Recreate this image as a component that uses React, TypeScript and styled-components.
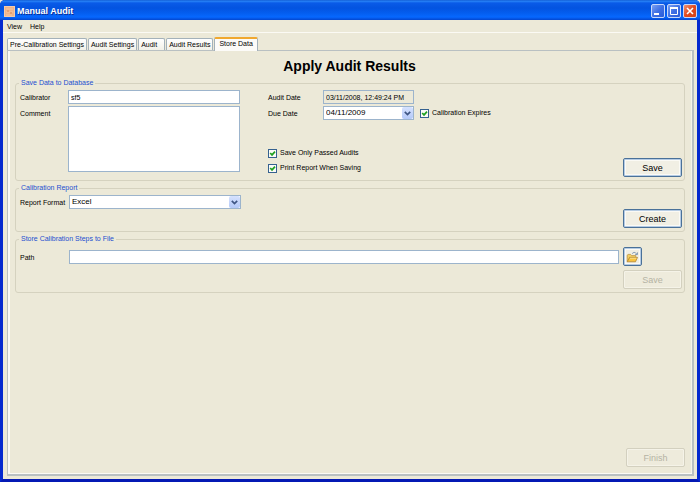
import React from "react";
import styled, { createGlobalStyle, css } from "styled-components";

const sans = `"Liberation Sans", Arial, sans-serif`;

const GlobalStyle = createGlobalStyle`
  * { box-sizing: border-box; }
  body { margin: 0; background: #ece9d8; }
  button, input, select, textarea { font: inherit; color: inherit; margin: 0; }
`;

const Window = styled.div`
  display: flex;
  flex-direction: column;
  min-height: 100vh;
  border: solid;
  border-width: 0 3px 3px;
  border-color: #0645e4 #0429cf #0419b4 #0429cf;
  border-radius: 5px 5px 0 0;
  background: #ece9d8;
  color: #000;
  font: 7px/10px ${sans};
`;

const TitleBar = styled.header`
  display: flex;
  align-items: center;
  gap: 2px;
  height: 20px;
  margin: 0 -3px;
  padding: 2px 3px 0 4px;
  border-radius: 5px 5px 0 0;
  background: linear-gradient(#0a4fc9 0, #2a86f8 1px, #0a5be8 3px, #0353e0 8px, #0460f2 14px, #0668ff 17px, #0346cf 20px);
  color: #fff;
`;

const WindowTitle = styled.span`
  flex: 1;
  font: bold 9px/12px ${sans};
  text-shadow: 1px 1px 0 #0a2f96;
`;

const CaptionButtons = styled.div`
  display: flex;
  gap: 2px;
`;

const CaptionButton = styled.button<{ $close?: boolean }>`
  display: flex;
  width: 14px;
  height: 14px;
  padding: 0;
  border: 1px solid #c8d8fa;
  border-radius: 2px;
  background: ${(p) =>
    p.$close
      ? "linear-gradient(135deg, #ee9476, #e04a1e 50%, #d0441a)"
      : "linear-gradient(135deg, #7ba0f2, #3f70e4 50%, #2a5cd8)"};
`;

const MenuBar = styled.nav`
  display: flex;
  gap: 8px;
  height: 13px;
  padding: 1px 4px 0;
  border-bottom: 1px solid #fbfaf4;
`;

const MenuButton = styled.button`
  padding: 0;
  border: 0;
  background: none;
`;

const Tabs = styled.div`
  display: flex;
  align-items: flex-end;
  gap: 1px;
  height: 17px;
  padding: 0 4px;
`;

const Tab = styled.button<{ $active?: boolean }>`
  min-width: 27px;
  height: 12px;
  padding: 0 2px;
  border: 1px solid #a3b1ba;
  border-bottom: 0;
  border-radius: 2px 2px 0 0;
  background: linear-gradient(#fff, #f2f1e8);
  text-align: left;
  white-space: nowrap;
  ${(p) =>
    p.$active &&
    css`
      height: 14px;
      margin-bottom: -1px;
      padding: 0 4px 2px;
      border-top: 2px solid #f0a830;
      background: #fcfbf8;
      z-index: 1;
    `}
`;

const Panel = styled.main`
  display: flex;
  flex: 1;
  flex-direction: column;
  gap: 2px;
  margin: 0 3px 3px 4px;
  padding: 8px 7px 7px 6px;
  border: solid #b9c0c2;
  border-width: 1px 2px 2px 1px;
  box-shadow: inset 2px 0 0 #fbfaf6, inset 0 -1px 0 #fbfaf6, inset -1px 0 0 #f6f4ea;
`;

const Heading = styled.h1`
  margin: 0 0 3px;
  font: bold 14px/14px ${sans};
  text-align: center;
`;

const Group = styled.fieldset`
  min-width: 0;
  margin: 0 0 0 1px;
  padding: 2px 2px 3px 4px;
  border: 1px solid #d5d2bf;
  border-radius: 3px;
`;

const Legend = styled.legend`
  margin-left: -1px;
  padding: 0 2px;
  color: #1c4fd0;
`;

const SaveArea = styled.div`
  display: flex;
  justify-content: space-between;
  min-height: 87px;
`;

const SaveAction = styled.div`
  align-self: flex-end;
`;

const Fields = styled.div<{ $label: number; $field: string }>`
  display: grid;
  grid-template-columns: ${(p) => p.$label}px ${(p) => p.$field};
  align-content: start;
  gap: 2px 0;
`;

const Columns = styled.div`
  display: flex;
  gap: 28px;
`;

const Stack = styled.div<{ $gap: number }>`
  display: flex;
  flex-direction: column;
  gap: ${(p) => p.$gap}px;
`;

const Label = styled.label`
  padding-top: 3px;
  white-space: nowrap;
`;

const boxed = css`
  width: 100%;
  border: 1px solid #9cb4cc;
  border-radius: 0;
  background: #fff;
  outline: 0;
`;

const TextInput = styled.input`
  ${boxed}
  display: block;
  height: 14px;
  padding: 0 2px;
  &:read-only {
    background: #ece9d8;
  }
`;

const TextArea = styled.textarea`
  ${boxed}
  display: block;
  height: 66px;
  padding: 1px 2px;
  resize: none;
`;

const SelectBox = styled.div`
  position: relative;
`;

const NativeSelect = styled.select`
  ${boxed}
  display: block;
  height: 14px;
  padding: 0 14px 0 2px;
  font-size: 8px;
  appearance: none;
`;

const SelectArrow = styled.span`
  position: absolute;
  top: 1px;
  right: 1px;
  display: flex;
  align-items: center;
  justify-content: center;
  width: 11px;
  height: 12px;
  border-radius: 2px;
  background: linear-gradient(#d6e2fe, #b4c9f8);
  pointer-events: none;
`;

const DateRow = styled.div`
  display: flex;
  align-items: center;
  gap: 6px;
`;

const DateField = styled.div`
  width: 91px;
`;

const CheckLabel = styled.label`
  display: flex;
  align-items: center;
  gap: 3px;
  white-space: nowrap;
`;

const CheckBox = styled.input`
  width: 9px;
  height: 9px;
  border: 1px solid #35618f;
  background: #fbfbf8;
  appearance: none;
  &:checked {
    background: #fbfbf8
      url("data:image/svg+xml,%3Csvg xmlns='http://www.w3.org/2000/svg' viewBox='0 0 7 7'%3E%3Cpath d='M1.2 3 3 4.9 6 1.6' fill='none' stroke='%2321a121' stroke-width='1.7'/%3E%3C/svg%3E")
      center / 7px 7px no-repeat;
  }
`;

const PushButton = styled.button<{ $icon?: boolean }>`
  display: flex;
  flex: none;
  align-items: center;
  justify-content: center;
  width: ${(p) => (p.$icon ? 19 : 59)}px;
  height: 19px;
  padding: 0;
  border: 1px solid #4a7199;
  border-radius: 2px;
  background: #f1efe4;
  box-shadow: inset 0 0 0 1px #b5cbe3, inset 0 0 0 2px #fbfaf5;
  font: 9px/10px ${sans};
  &:disabled {
    border-color: #d3d0bf;
    background: #eeebdc;
    box-shadow: inset 0 0 0 1px #f5f3e8;
    color: #b5b3a4;
  }
`;

const PathRow = styled.div`
  display: flex;
  align-items: center;
  gap: 4px;
  padding: 1px 40px 4px 0;
`;

const PathLabel = styled(Label)`
  width: 45px;
`;

const PathField = styled.div`
  flex: 1;
`;

const Actions = styled.div`
  display: flex;
  justify-content: flex-end;
`;

const Footer = styled(Actions)`
  margin-top: auto;
`;

function Select({ id, options }: { id: string; options: string[] }) {
  return (
    <SelectBox>
      <NativeSelect id={id}>
        {options.map((o) => (
          <option key={o}>{o}</option>
        ))}
      </NativeSelect>
      <SelectArrow>
        <svg width="7" height="5" viewBox="0 0 7 5">
          <path d="M.8.8 3.5 3.5 6.2.8" fill="none" stroke="#3f5684" strokeWidth="1.7" />
        </svg>
      </SelectArrow>
    </SelectBox>
  );
}

function Check({ text }: { text: string }) {
  return (
    <CheckLabel>
      <CheckBox type="checkbox" defaultChecked />
      {text}
    </CheckLabel>
  );
}

function AppIcon() {
  return (
    <svg width="11" height="11" viewBox="0 0 11 11">
      <path d="M0 0h11v11H0z" fill="#f5cba8" />
      <path d="M1 1h9v9H1z" fill="#eeb48a" />
      <path d="M2 3h7M2 6h7M2 9h6" stroke="#f3c6a0" />
      <path d="M3 4h2v2H3zM6 6h2v2H6z" fill="#e3a074" />
    </svg>
  );
}

function FolderIcon() {
  return (
    <svg width="13" height="12" viewBox="0 0 13 12">
      <path d="M1.2 10.5V4.2l.8-.8h2.6l1 1.2h4.2v2" fill="#f3cf62" stroke="#b98d38" strokeWidth=".7" />
      <path d="M1.2 10.8 3.6 6.4h7.9l-2 4.4z" fill="#f9c440" stroke="#a87a28" strokeWidth=".7" />
      <path d="M4 7.2h6.4" stroke="#fde9a0" strokeWidth=".8" />
      <path d="M6.2 2.6C7.4 1 9.3 1 10.5 2.8M11.4 1.4v2.2H9.2" fill="none" stroke="#6d88a8" strokeWidth=".9" />
    </svg>
  );
}

export default function App() {
  return (
    <>
      <GlobalStyle />
      <Window>
        <TitleBar>
          <AppIcon />
          <WindowTitle>Manual Audit</WindowTitle>
          <CaptionButtons>
            <CaptionButton aria-label="Minimize">
              <svg width="12" height="12"><path d="M2 9h5" stroke="#fff" strokeWidth="2" /></svg>
            </CaptionButton>
            <CaptionButton aria-label="Maximize">
              <svg width="12" height="12">
                <path d="M2.5 3v6.5h7V3" fill="none" stroke="#fff" />
                <path d="M2 3h8" stroke="#fff" strokeWidth="2" />
              </svg>
            </CaptionButton>
            <CaptionButton $close aria-label="Close">
              <svg width="12" height="12"><path d="m3 3 6 6m0-6L3 9" stroke="#fff" strokeWidth="1.6" /></svg>
            </CaptionButton>
          </CaptionButtons>
        </TitleBar>
        <MenuBar>
          <MenuButton>View</MenuButton>
          <MenuButton>Help</MenuButton>
        </MenuBar>
        <Tabs role="tablist">
          <Tab role="tab">Pre-Calibration Settings</Tab>
          <Tab role="tab">Audit Settings</Tab>
          <Tab role="tab">Audit</Tab>
          <Tab role="tab">Audit Results</Tab>
          <Tab role="tab" aria-selected $active>Store Data</Tab>
        </Tabs>
        <Panel>
          <Heading>Apply Audit Results</Heading>
          <Group>
            <Legend>Save Data to Database</Legend>
            <SaveArea>
              <Columns>
                <Fields $label={48} $field="172px">
                  <Label htmlFor="calibrator">Calibrator</Label>
                  <TextInput id="calibrator" defaultValue="sf5" />
                  <Label htmlFor="comment">Comment</Label>
                  <TextArea id="comment" />
                </Fields>
                <Stack $gap={28}>
                  <Fields $label={55} $field="auto">
                    <Label htmlFor="audit-date">Audit Date</Label>
                    <DateField>
                      <TextInput id="audit-date" readOnly value="03/11/2008, 12:49:24 PM" />
                    </DateField>
                    <Label htmlFor="due-date">Due Date</Label>
                    <DateRow>
                      <DateField>
                        <Select id="due-date" options={["04/11/2009"]} />
                      </DateField>
                      <Check text="Calibration Expires" />
                    </DateRow>
                  </Fields>
                  <Stack $gap={5}>
                    <Check text="Save Only Passed Audits" />
                    <Check text="Print Report When Saving" />
                  </Stack>
                </Stack>
              </Columns>
              <SaveAction>
                <PushButton>Save</PushButton>
              </SaveAction>
            </SaveArea>
          </Group>
          <Group>
            <Legend>Calibration Report</Legend>
            <Fields $label={49} $field="172px">
              <Label htmlFor="format">Report Format</Label>
              <Select id="format" options={["Excel"]} />
            </Fields>
            <Actions>
              <PushButton>Create</PushButton>
            </Actions>
          </Group>
          <Group>
            <Legend>Store Calibration Steps to File</Legend>
            <PathRow>
              <PathLabel htmlFor="path">Path</PathLabel>
              <PathField>
                <TextInput id="path" />
              </PathField>
              <PushButton $icon aria-label="Browse">
                <FolderIcon />
              </PushButton>
            </PathRow>
            <Actions>
              <PushButton disabled>Save</PushButton>
            </Actions>
          </Group>
          <Footer>
            <PushButton disabled>Finish</PushButton>
          </Footer>
        </Panel>
      </Window>
    </>
  );
}
